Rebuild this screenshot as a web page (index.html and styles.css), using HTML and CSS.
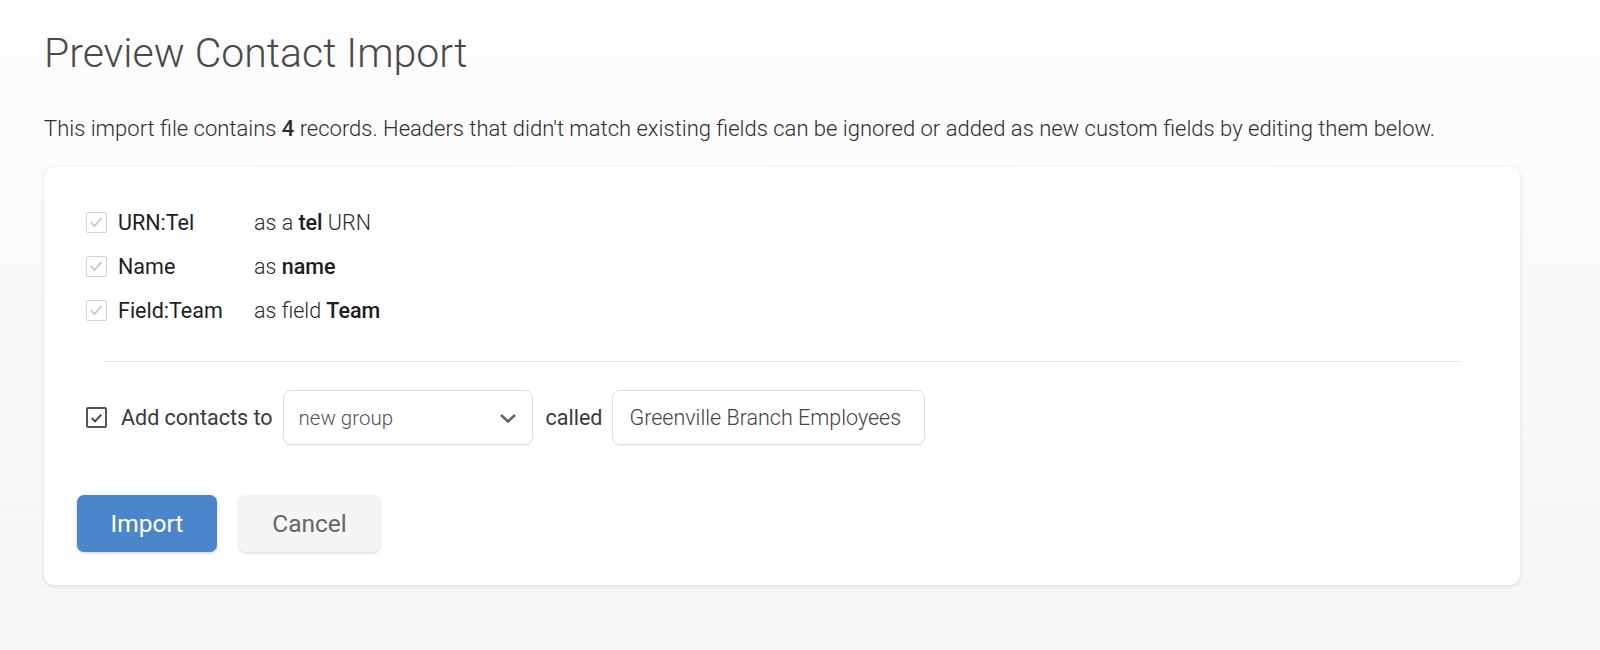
FILE: index.html
```html
<html>
<head>
<title>Preview Contact Import</title>
<link rel="stylesheet" href="styles.css">
</head>
<body>

<div id="page">
  <h1 class="title">Preview Contact Import</h1>
  <p class="intro">This import file contains <b>4</b> records. Headers that didn't match existing fields can be ignored or added as new custom fields by editing them below.</p>

  <div class="card">
    <div class="fields">
      <div class="field-row">
        <span class="check disabled">
          <svg viewBox="0 0 20 20" width="20" height="20"><path d="M4.5 10 L8.5 14 L15.5 6" fill="none" stroke="#c4c4c4" stroke-width="1.7"/></svg>
        </span>
        <span class="field-name">URN:Tel</span>
        <span class="field-desc">as a <b>tel</b> URN</span>
      </div>
      <div class="field-row">
        <span class="check disabled">
          <svg viewBox="0 0 20 20" width="20" height="20"><path d="M4.5 10 L8.5 14 L15.5 6" fill="none" stroke="#c4c4c4" stroke-width="1.7"/></svg>
        </span>
        <span class="field-name">Name</span>
        <span class="field-desc">as <b>name</b></span>
      </div>
      <div class="field-row">
        <span class="check disabled">
          <svg viewBox="0 0 20 20" width="20" height="20"><path d="M4.5 10 L8.5 14 L15.5 6" fill="none" stroke="#c4c4c4" stroke-width="1.7"/></svg>
        </span>
        <span class="field-name">Field:Team</span>
        <span class="field-desc">as field <b>Team</b></span>
      </div>
    </div>

    <div class="divider"></div>

    <div class="group-row">
      <span class="check active">
        <svg viewBox="0 0 20 20" width="20" height="20"><path d="M5 10 L8.5 13.5 L15 6.5" fill="none" stroke="#444" stroke-width="2"/></svg>
      </span>
      <span class="group-label first">Add contacts to</span>
      <div class="select">
        <span>new group</span>
        <svg viewBox="0 0 20 20" width="20" height="20"><path d="M3 7 L10 13.5 L17 7" fill="none" stroke="#666" stroke-width="2.6"/></svg>
      </div>
      <span class="group-label">called</span>
      <div class="text-input">Greenville Branch Employees</div>
    </div>

    <div class="buttons">
      <button class="btn primary">Import</button>
      <button class="btn secondary">Cancel</button>
    </div>
  </div>
</div>

</body>
</html>
```

FILE: styles.css
```css
body {
  margin:0;
  min-height:650px;
  background:linear-gradient(#fdfdfd, #f6f6f6);
  font-family:Roboto, "Liberation Sans", sans-serif;
  color:#333;
}

#page {
  padding:0 80px 0 44px;
}

.title {
  margin:0;
  padding-top:28px;
  font-size:41px;
  font-weight:300;
  line-height:50px;
  color:#4a4a4a;
}

.intro {
  margin:37px 0 0 0;
  font-size:22px;
  font-weight:300;
  line-height:28px;
  color:#2e2e2e;
}

.intro b {
  font-weight:500;
}

.card {
  margin-top:24px;
  background:#fff;
  border-radius:10px;
  box-shadow:0 1px 4px rgba(0,0,0,0.12);
  padding:37px 42px 33px 33px;
}

.fields {
  padding-left:9px;
}

.field-row {
  display:flex;
  align-items:center;
  height:44px;
  font-size:21.5px;
}

.field-row:first-child {
  margin-top:-4px;
}

.check {
  display:inline-flex;
  width:21px;
  height:21px;
  box-sizing:border-box;
  border-radius:2px;
  flex-shrink:0;
}

.check svg {
  margin:-1px;
}

.check.disabled {
  border:1.5px solid #d2d2d2;
}

.check.active {
  border:2px solid #555;
}

.field-name {
  width:136px;
  margin-left:11px;
  font-weight:400;
  color:#1e1e1e;
}

.field-desc {
  font-weight:300;
  color:#2a2a2a;
}

.field-desc b {
  font-weight:500;
  color:#1e1e1e;
}

.divider {
  margin:29px 18px 0 28px;
  border-top:1px solid #e6e6e6;
}

.group-row {
  display:flex;
  align-items:center;
  margin-top:28px;
  padding-left:9px;
  font-size:21.5px;
}

.group-label {
  margin:0 10px 0 13px;
  color:#3a3a3a;
}

.group-label.first {
  margin-left:14px;
}

.select {
  display:flex;
  align-items:center;
  justify-content:space-between;
  width:250px;
  height:55px;
  box-sizing:border-box;
  border:1px solid #ddd;
  border-radius:8px;
  padding:0 14px 0 15px;
  font-size:20.5px;
  font-weight:300;
  color:#555;
  box-shadow:0 1px 2px rgba(0,0,0,0.05);
}

.text-input {
  display:flex;
  align-items:center;
  width:313px;
  height:55px;
  box-sizing:border-box;
  border:1px solid #ddd;
  border-radius:8px;
  padding:0 16px;
  font-size:21.5px;
  font-weight:300;
  color:#444;
  box-shadow:0 1px 2px rgba(0,0,0,0.05);
}

.buttons {
  display:flex;
  gap:22px;
  margin-top:50px;
}

.btn {
  height:57px;
  width:140px;
  border:0;
  border-radius:7px;
  font-family:Roboto, "Liberation Sans", sans-serif;
  font-size:24.5px;
  cursor:pointer;
}

.btn.primary {
  background:#4a86c9;
  color:#fff;
  box-shadow:0 1px 3px rgba(0,0,0,0.2);
}

.btn.secondary {
  width:141px;
  background:#f5f5f5;
  color:#666;
  box-shadow:0 1px 3px rgba(0,0,0,0.18);
}
```
